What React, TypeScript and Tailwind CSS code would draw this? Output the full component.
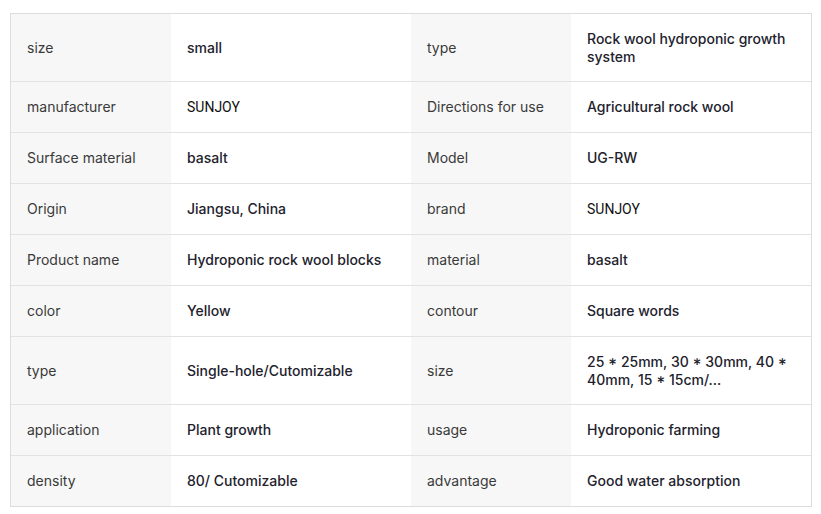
const rows: [string, string, string, string][] = [
  ["size", "small", "type", "Rock wool hydroponic growth system"],
  ["manufacturer", "SUNJOY", "Directions for use", "Agricultural rock wool"],
  ["Surface material", "basalt", "Model", "UG-RW"],
  ["Origin", "Jiangsu, China", "brand", "SUNJOY"],
  ["Product name", "Hydroponic rock wool blocks", "material", "basalt"],
  ["color", "Yellow", "contour", "Square words"],
  ["type", "Single-hole/Cutomizable", "size", "25 * 25mm, 30 * 30mm, 40 * 40mm, 15 * 15cm/..."],
  ["application", "Plant growth", "usage", "Hydroponic farming"],
  ["density", "80/ Cutomizable", "advantage", "Good water absorption"],
];

function Value({ text }: { text: string }) {
  // brand names render in a plain font in the original
  if (text === "SUNJOY") {
    return <span className="font-['Roboto',sans-serif] font-normal text-[#111]">{text}</span>;
  }
  return <>{text}</>;
}

export default function App() {
  return (
    <div className="min-h-screen bg-white pt-[13px] px-[10px] font-['Inter',sans-serif] text-[14px] leading-[18px]">
      <div className="w-[802px] border border-[#dcdcdc]">
        {rows.map((r, i) => {
          const last = i === rows.length - 1;
          return (
            <div
              key={i}
              className={`grid grid-cols-[160px_240px_160px_240px] ${last ? "min-h-[50px]" : "min-h-[51px] border-b border-[#e2e2e2]"}`}
            >
              <div className="flex items-center bg-[#f7f7f7] px-4 py-[15.5px] text-[#3a3a3a]">{r[0]}</div>
              <div className="flex items-center bg-white px-4 py-[15.5px] font-medium text-[#22222c]">
                <span><Value text={r[1]} /></span>
              </div>
              <div className="flex items-center bg-[#f7f7f7] px-4 py-[15.5px] text-[#3a3a3a]">{r[2]}</div>
              <div className="flex items-center bg-white pl-4 pr-6 py-[15.5px] font-medium text-[#22222c]">
                <span><Value text={r[3]} /></span>
              </div>
            </div>
          );
        })}
      </div>
    </div>
  );
}
